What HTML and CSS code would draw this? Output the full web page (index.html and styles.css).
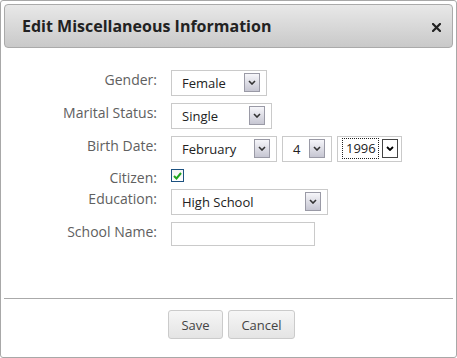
FILE: index.html
```html
<!DOCTYPE html>
<html>
<head>
<meta charset="utf-8">
<link rel="stylesheet" href="styles.css">
</head>
<body>
<div class="dialog">
  <div class="titlebar">
    <h1 class="title">Edit Miscellaneous Information</h1>
    <span class="close"><svg width="9" height="9" viewBox="0 0 9 9"><path d="M1 1L8 8M8 1L1 8" stroke="#222" stroke-width="2.2" stroke-linecap="square"/></svg></span>
  </div>
  <div class="form">
    <div class="label">Gender:</div>
    <div class="field">
      <div class="select w-gender"><span class="val">Female</span><span class="arrow"><svg width="8" height="5" viewBox="0 0 8 5"><path d="M1 1L4 4L7 1" fill="none" stroke="#333" stroke-width="1.6"/></svg></span></div>
    </div>
    <div class="label">Marital Status:</div>
    <div class="field">
      <div class="select w-marital"><span class="val">Single</span><span class="arrow"><svg width="8" height="5" viewBox="0 0 8 5"><path d="M1 1L4 4L7 1" fill="none" stroke="#333" stroke-width="1.6"/></svg></span></div>
    </div>
    <div class="label">Birth Date:</div>
    <div class="field row">
      <div class="select w-month"><span class="val">February</span><span class="arrow"><svg width="8" height="5" viewBox="0 0 8 5"><path d="M1 1L4 4L7 1" fill="none" stroke="#333" stroke-width="1.6"/></svg></span></div>
      <div class="select w-day"><span class="val">4</span><span class="arrow"><svg width="8" height="5" viewBox="0 0 8 5"><path d="M1 1L4 4L7 1" fill="none" stroke="#333" stroke-width="1.6"/></svg></span></div>
      <div class="select w-year focus"><span class="val">1996</span><span class="arrow"><svg width="8" height="5" viewBox="0 0 8 5"><path d="M1 1L4 4L7 1" fill="none" stroke="#000" stroke-width="1.8"/></svg></span></div>
    </div>
    <div class="label label-citizen">Citizen:</div>
    <div class="field">
      <span class="checkbox"><svg width="9" height="8" viewBox="0 0 9 8"><path d="M1 4L3.5 6.5L8 1" fill="none" stroke="#1fa51f" stroke-width="2"/></svg></span>
    </div>
    <div class="label">Education:</div>
    <div class="field">
      <div class="select w-edu"><span class="val">High School</span><span class="arrow"><svg width="8" height="5" viewBox="0 0 8 5"><path d="M1 1L4 4L7 1" fill="none" stroke="#333" stroke-width="1.6"/></svg></span></div>
    </div>
    <div class="label">School Name:</div>
    <div class="field">
      <div class="input"></div>
    </div>
  </div>
  <div class="footer">
    <button class="btn btn-save">Save</button>
    <button class="btn btn-cancel">Cancel</button>
  </div>
</div>
</body>
</html>
```

FILE: styles.css
```css
html, body {
  margin: 0;
  padding: 0;
  background: #fff;
}
body {
  font-family: "Open Sans", "DejaVu Sans", sans-serif;
}
.dialog {
  width: 457px;
  height: 358px;
  box-sizing: border-box;
  border: 1px solid #a8a8a8;
  border-radius: 3px;
  padding: 3px;
  display: flex;
  flex-direction: column;
  background: #fff;
}
.titlebar {
  height: 44px;
  box-sizing: border-box;
  border: 1px solid #aaaaaa;
  border-radius: 4px;
  background: linear-gradient(#e8e8e8, #c9c9c9);
  display: flex;
  align-items: center;
  justify-content: space-between;
  padding: 0 11px 0 17px;
}
.title {
  margin: 0;
  font-size: 16px;
  font-weight: 700;
  color: #222;
  line-height: 20px;
}
.close {
  display: flex;
  width: 9px;
  height: 9px;
  margin-top: 2px;
}
.form {
  margin-top: 22px;
  display: grid;
  grid-template-columns: 153px auto;
  column-gap: 14px;
  row-gap: 7px;
  align-items: start;
}
.label {
  text-align: right;
  font-size: 14px;
  line-height: 18px;
  color: #606060;
  padding-top: 1px;
}
.label-citizen {
  padding-top: 0;
  margin-bottom: -5px;
}
.field {
  display: flex;
}
.row {
  gap: 5px;
}
.select {
  height: 26px;
  box-sizing: border-box;
  border: 1px solid #cacaca;
  background: #fff;
  display: flex;
  align-items: center;
  justify-content: space-between;
  padding: 0 6px 1px 10px;
  font-size: 13px;
  color: #222;
}
.val {
  line-height: 18px;
}
.arrow {
  width: 16px;
  height: 19px;
  box-sizing: border-box;
  border: 1px solid #9a9aa6;
  background: linear-gradient(#f6f6fa, #c6c6d2);
  display: flex;
  align-items: center;
  justify-content: center;
}
.w-gender { width: 96px; }
.w-marital { width: 101px; }
.w-month { width: 106px; }
.w-day { width: 50px; }
.w-year { width: 65px; padding-left: 5px; padding-right: 3px; }
.w-edu { width: 157px; }
.focus .val {
  outline: 1px dotted #222;
  padding: 0 2px 0 3px;
  line-height: 19px;
}
.focus .arrow {
  border: 1px solid #444;
  background: #fff;
  margin-left: 1px;
}
.checkbox {
  width: 13px;
  height: 13px;
  box-sizing: border-box;
  border: 1px solid #1c5180;
  background: linear-gradient(#f4f4f4, #fff);
  display: flex;
  align-items: center;
  justify-content: center;
}
.input {
  width: 144px;
  height: 24px;
  box-sizing: border-box;
  border: 1px solid #cacaca;
  background: #fff;
}
.footer {
  margin-top: auto;
  height: 56px;
  box-sizing: border-box;
  border-top: 1px solid #aaaaaa;
  padding: 11px 0 0 6px;
  display: flex;
  justify-content: center;
  align-items: flex-start;
  gap: 5px;
}
.btn {
  height: 29px;
  box-sizing: border-box;
  border: 1px solid #cbcbcb;
  border-radius: 3px;
  background: linear-gradient(#f6f6f6, #e4e4e4);
  font-family: "Open Sans", "DejaVu Sans", sans-serif;
  font-size: 13px;
  color: #444;
  padding: 0;
}
.btn-save { width: 55px; }
.btn-cancel { width: 67px; }
```
